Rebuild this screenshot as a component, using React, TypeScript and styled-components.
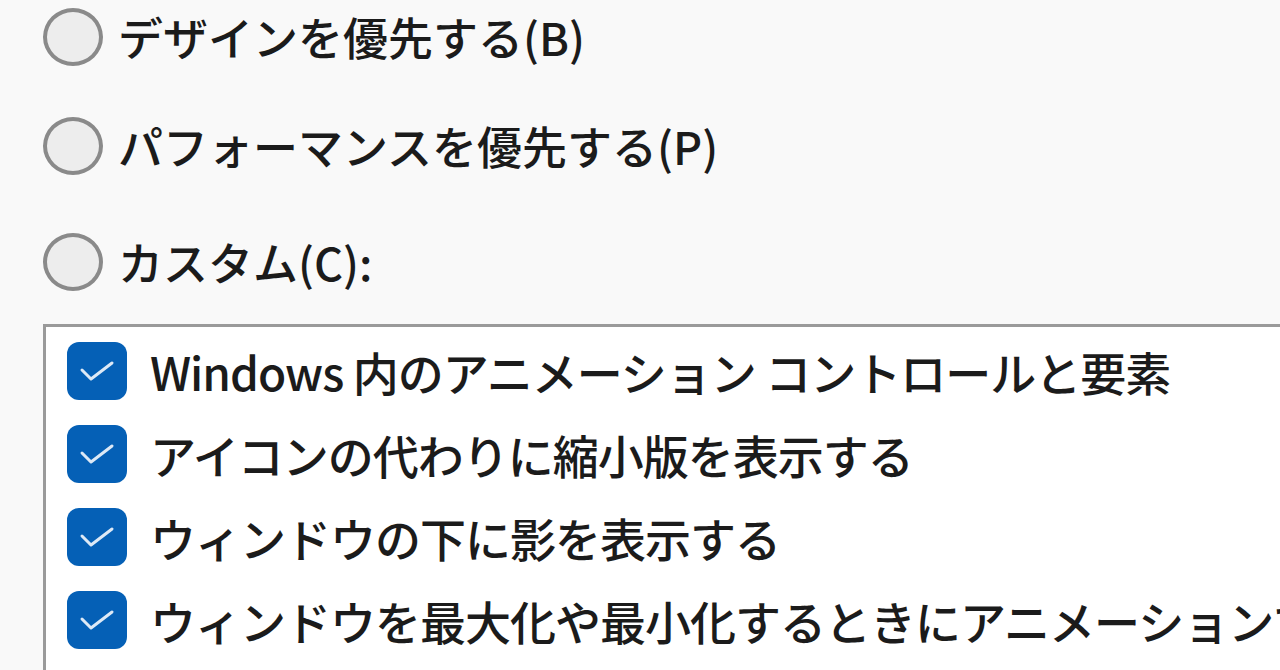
import React from "react";
import styled, { createGlobalStyle } from "styled-components";

const Global = createGlobalStyle`
  html, body { margin: 0; padding: 0; }
  body {
    background: #f9f9f9;
    width: 1280px;
    height: 670px;
    overflow: hidden;
    font-family: "Noto Sans CJK JP", "Noto Sans", sans-serif;
    color: #1b1b1b;
  }
`;

const Page = styled.div`
  padding: 8px 0 0 43px;
  display: flex;
  flex-direction: column;
`;

const RadioRow = styled.label<{ $mt: number }>`
  display: flex;
  align-items: center;
  gap: 15px;
  height: 58px;
  margin-top: ${(p) => p.$mt}px;
`;

const RadioCircle = styled.span`
  box-sizing: border-box;
  width: 60px;
  height: 58px;
  border-radius: 50%;
  border: 4px solid #8a8a8a;
  background: #ededed;
  flex: none;
`;

const Label = styled.span`
  font-size: 45px;
  font-weight: 500;
  line-height: 58px;
  letter-spacing: 0px;
  white-space: nowrap;
`;

const ListBox = styled.div`
  margin-top: 33px;
  width: 1300px;
  height: 400px;
  box-sizing: border-box;
  border: 3px solid #9a9a9a;
  border-right: none;
  border-bottom: none;
  background: #ffffff;
  padding: 15px 0 0 21px;
  display: flex;
  flex-direction: column;
  gap: 25px;
`;

const CheckRow = styled.div`
  display: flex;
  align-items: center;
  gap: 23px;
  height: 58px;
`;

const CheckBox = styled.span`
  width: 60px;
  height: 58px;
  border-radius: 12px;
  background: #0560b6;
  display: flex;
  align-items: center;
  justify-content: center;
  flex: none;
`;

const CheckLabel = styled.span`
  font-size: 46px;
  font-weight: 500;
  line-height: 58px;
  letter-spacing: -1px;
  white-space: nowrap;
`;

const Check = () => (
  <svg width="36" height="22" viewBox="0 0 36 22">
    <path
      d="M3 10 L12 19 L33 3"
      fill="none"
      stroke="#dde9f6"
      strokeWidth="3"
      strokeLinecap="round"
      strokeLinejoin="round"
    />
  </svg>
);

const radios = [
  { text: "デザインを優先する(B)", mt: 0 },
  { text: "パフォーマンスを優先する(P)", mt: 51 },
  { text: "カスタム(C):", mt: 58 },
];

const checks = [
  "Windows 内のアニメーション コントロールと要素",
  "アイコンの代わりに縮小版を表示する",
  "ウィンドウの下に影を表示する",
  "ウィンドウを最大化や最小化するときにアニメーションで表示する",
];

export default function App() {
  return (
    <>
      <Global />
      <Page>
        {radios.map((r) => (
          <RadioRow key={r.text} $mt={r.mt}>
            <RadioCircle />
            <Label>{r.text}</Label>
          </RadioRow>
        ))}
        <ListBox>
          {checks.map((c) => (
            <CheckRow key={c}>
              <CheckBox>
                <Check />
              </CheckBox>
              <CheckLabel>{c}</CheckLabel>
            </CheckRow>
          ))}
        </ListBox>
      </Page>
    </>
  );
}
